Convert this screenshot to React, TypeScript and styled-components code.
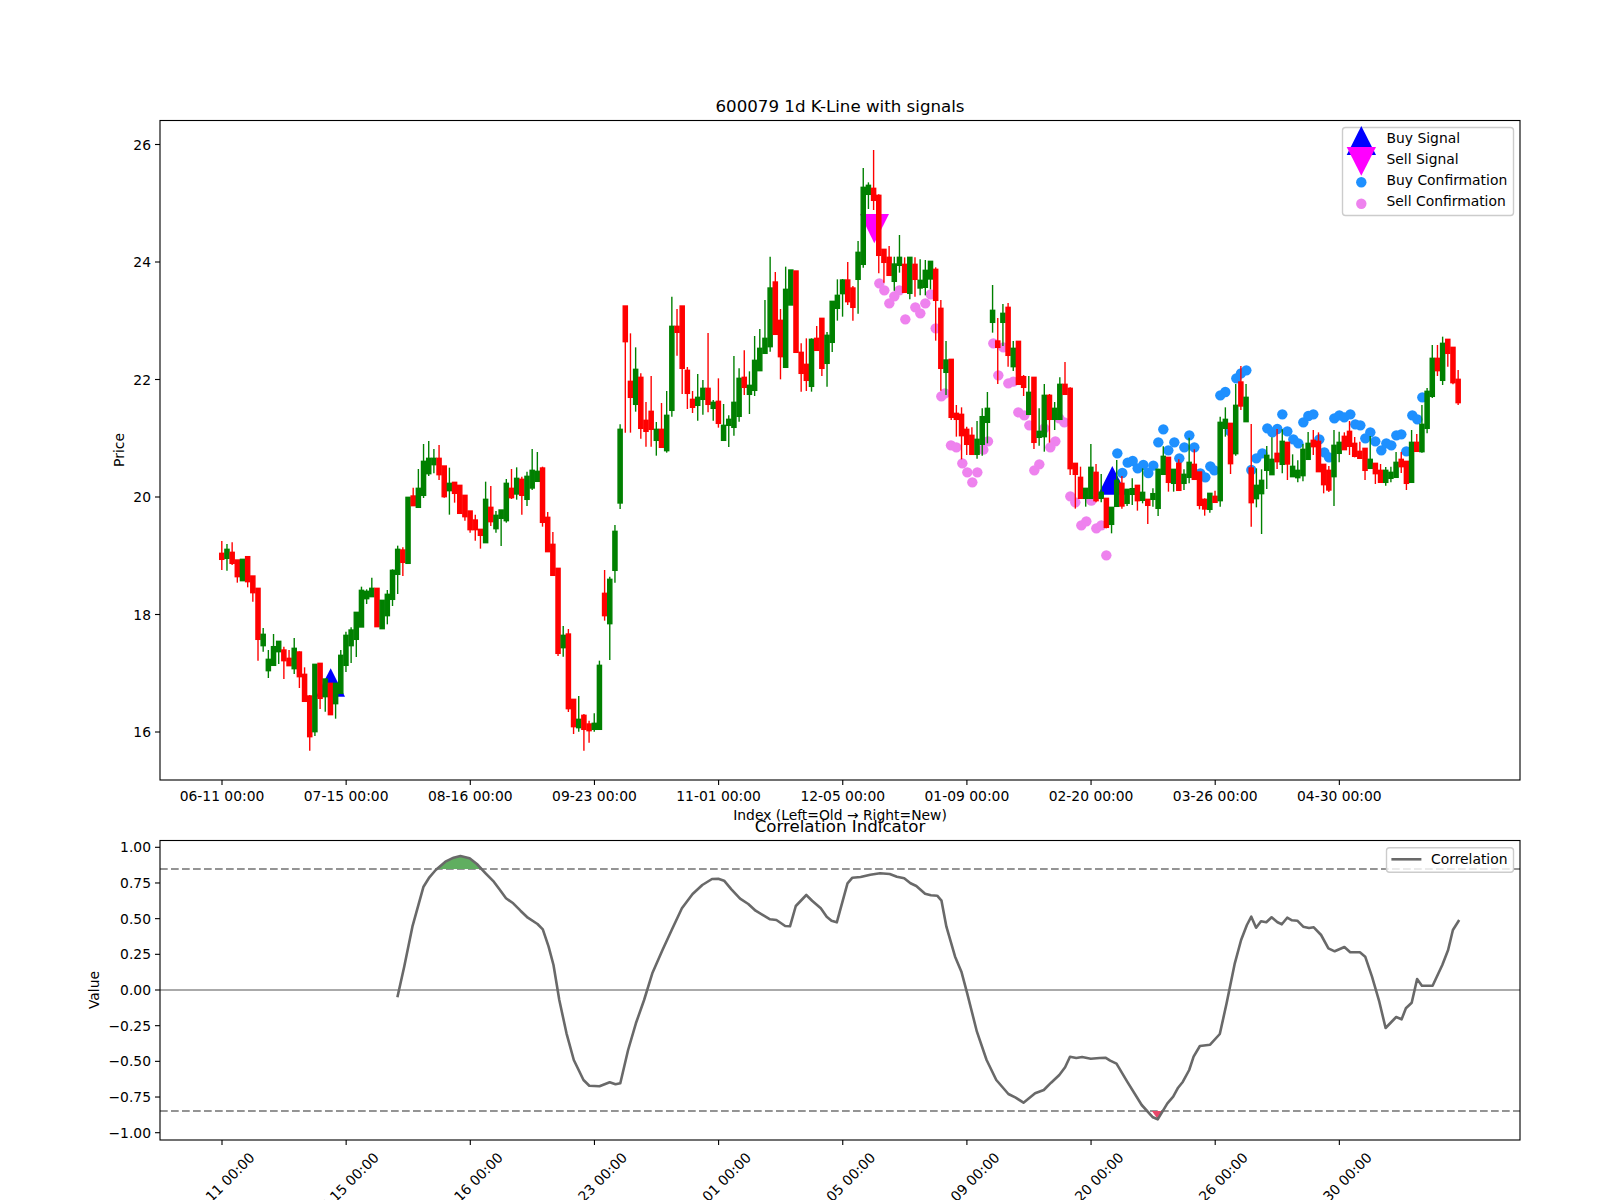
import React from "react";
import styled, { createGlobalStyle } from "styled-components";

const GlobalStyle = createGlobalStyle`
  html, body { margin: 0; padding: 0; background: #ffffff; }
`;

const Figure = styled.main`
  width: 1600px;
  height: 1200px;
  display: flex;
  flex-direction: column;
  overflow: hidden;
  background: #ffffff;
  font-family: "DejaVu Sans", sans-serif;
`;

const PricePanel = styled.svg`
  display: block;
  flex: 0 0 830px;
  width: 1600px;
  height: 830px;
  overflow: visible;
`;

const CorrelationPanel = styled.svg`
  display: block;
  flex: 0 0 370px;
  width: 1600px;
  height: 370px;
  overflow: visible;
`;

const ChartText = styled.text<{ $size?: number; $anchor?: string }>`
  font-family: "DejaVu Sans", sans-serif;
  font-size: ${(p) => p.$size ?? 13.89}px;
  text-anchor: ${(p) => p.$anchor ?? "middle"};
  fill: #000000;
`;

const AxesFrame = styled.rect`
  fill: none;
  stroke: #000000;
  stroke-width: 1.11;
`;

const Tick = styled.line`
  stroke: #000000;
  stroke-width: 1.11;
`;

const LegendBox = styled.rect`
  fill: rgba(255, 255, 255, 0.8);
  stroke: #cccccc;
  stroke-width: 1.39;
`;

const Wick = styled.line<{ $up: boolean }>`
  stroke: ${(p) => (p.$up ? "#008000" : "#ff0000")};
  stroke-width: 1.39;
`;

const Body = styled.rect<{ $up: boolean }>`
  fill: ${(p) => (p.$up ? "#008000" : "#ff0000")};
  stroke: ${(p) => (p.$up ? "#008000" : "#ff0000")};
  stroke-width: 1.39;
`;

const Marker = styled.polygon<{ $color: string }>`
  fill: ${(p) => p.$color};
`;

const Dot = styled.circle<{ $color: string }>`
  fill: ${(p) => p.$color};
`;

const GuideLine = styled.line<{ $dashed?: boolean }>`
  stroke: ${(p) => (p.$dashed ? "#949494" : "#aaaaaa")};
  stroke-width: 2.08;
  stroke-dasharray: ${(p) => (p.$dashed ? "7.7 3.3" : "none")};
`;

const CorrelationLine = styled.polyline`
  fill: none;
  stroke: #696969;
  stroke-width: 2.6;
  stroke-linejoin: round;
`;

const LegendLine = styled.line`
  stroke: #696969;
  stroke-width: 2.6;
`;

const Shade = styled.polygon<{ $color: string }>`
  fill: ${(p) => p.$color};
`;

type Bar = { up: boolean; top: number; bottom: number; high: number; low: number };

const seg = (originY: number, text: string): Bar[] =>
  text
    .trim()
    .split(";")
    .map((row) => {
      const [c, a, b, h, l] = row.trim().split(" ");
      const y = (v: string) => originY + Number(v) / 3;
      return { up: c === "G", top: y(a), bottom: y(b), high: y(h), low: y(l) };
    });

const BARS: Bar[] = [
  ...seg(530, `R 70 88 33 120;G 58 85 42 122;R 67 100 37 105;R 90 140 90 158;G 88 152 88 152;R 80 155 80 172;R 138 188 138 215;R 175 328 175 392;G 313 347 294 365;G 388 422 360 444;G 350 406 312 406;G 334 365 334 402;R 360 392 350 447;R 385 407 360 407;G 355 416 324 432;R 366 440 364 474;R 433 514 412 514;R 498 620 495 662;G 403 605 403 618;R 400 505 400 537;G 447 500 447 545;R 460 554 460 554;G 460 521 460 566;G 376 490 360 490;G 316 406 305 426;G 300 347 292 399;G 247 328 247 381;G 181 291 170 291;G 184 206 178 222;G 175 200 143 200;R 175 290 175 290;G 211 296 211 296;G 193 257 180 283;G 121 208 118 228;G 58 133 47 192;R 60 97 52 138`),
  ...seg(430, `G 202 400 202 400;R 198 227 173 227;G 175 232 117 232;G 94 196 42 204;G 85 131 33 138;G 85 104 57 130;R 85 134 45 150;R 108 200 108 203;G 160 182 113 254;R 157 190 157 218;R 166 250 166 250;R 196 260 196 272;R 243 299 243 308;R 270 299 254 332;R 298 316 298 356;G 208 338 155 338;R 232 275 168 288;G 256 296 243 308;G 240 265 240 348;G 160 272 147 278;R 175 203 117 207;G 145 192 112 209;R 148 196 140 254;G 139 208 125 228;G 121 174 57 180;G 124 154 66 154;R 114 277 110 290;R 262 365 246 365;R 343 436 306 436;R 415 670 415 678;G 616 653 588 680;R 612 836 597 846;R 808 890 808 912;G 868 893 798 905;R 856 898 852 962;R 882 902 872 938;G 880 898 850 905;G 706 898 692 898;R 490 557 420 572;G 448 581 440 690;G 304 421 285 458`),
  ...seg(290, `G 418 639 403 657;R 48 155 48 428;R 274 322 130 428;G 238 343 172 365;R 262 415 250 446;R 391 424 336 470;R 364 418 258 470;G 418 451 396 497;R 418 472 339 472;G 376 482 303 488;G 109 361 20 380;R 109 127 57 197;R 48 235 48 312;R 241 310 231 357;R 328 352 303 369;G 322 346 252 392;G 295 328 270 374;R 295 343 129 367;G 337 355 330 392;R 334 400 265 413;G 406 451 342 451;G 388 406 376 471;G 337 412 198 437;G 265 379 235 395;R 262 292 181 315;G 286 313 244 372;G 211 301 138 318`),
  ...seg(130, `G 655 722 597 722;G 625 670 510 670;G 474 650 380 665;R 456 613 426 613;R 571 680 537 748;G 478 712 410 712;G 420 525 420 525;R 423 667 423 667;R 667 730 640 785;R 703 751 625 783;G 628 769 625 785;R 625 661 588 661;R 565 715 565 738;G 616 700 606 770;G 514 637 514 666;G 496 535 448 572;G 450 491 447 560;R 450 515 396 525;R 474 532 468 572;G 367 448 333 551;G 172 403 114 413;G 166 193 157 237;R 175 211 60 240;R 196 376 193 430;R 358 397 358 458;R 382 436 348 436;G 402 454 380 482;G 382 406 315 428;R 403 487 382 487;G 382 490 382 508;R 403 448 382 500;G 451 474 388 496;G 421 472 390 496;G 394 447 394 478;R 418 511 412 632`),
  ...seg(270, `R 115 295 90 362;G 270 307 213 375;R 268 442 268 450;R 430 448 405 500;R 433 497 412 568;R 478 523 470 555;R 496 553 472 553;G 508 553 453 566;G 440 523 415 557;G 415 457 366 520;G 121 157 45 188;R 213 232 144 342;G 130 157 102 228;R 112 256 99 290;G 235 290 213 303;R 214 343 214 343;R 320 352 315 378;G 367 433 318 433;R 322 517 322 537;G 484 502 415 527;G 376 500 342 545;R 376 448 372 518;G 415 448 396 480;G 343 448 322 448;R 343 373 276 373;R 355 596 352 615;R 580 613 580 716;R 622 685 590 685;G 655 685 655 710;G 592 685 522 685;R 607 692 582 697;G 667 685 612 697;R 685 772 685 775;G 712 763 712 790;G 631 709 570 709;R 640 708 618 716;G 658 700 658 708;G 656 673 625 705;R 646 692 646 722;G 667 691 595 700;R 688 706 688 762;G 671 688 655 710;G 598 715 596 738;G 559 613 529 613;R 562 637 562 665;G 598 640 598 665;R 580 661 568 661;G 613 640 598 660;G 577 622 503 640;R 583 628 538 628;R 606 706 606 718;R 688 717 685 737;G 670 718 670 728;R 679 697 662 697`),
  ...seg(320, `G 307 542 290 560;G 298 325 262 350;R 310 431 310 462;G 256 401 192 407;R 186 258 138 270;G 232 305 192 305;R 444 548 312 620;G 496 536 445 562;G 481 521 448 642;G 406 451 378 507;G 418 464 352 464;R 400 425 327 447;G 364 433 328 460;R 367 432 367 480;G 439 470 403 470;G 451 473 421 487;G 388 467 372 484;G 370 418 336 418;R 361 380 330 405;R 364 455 337 455;R 433 494 433 520;R 451 510 438 516;G 376 470 330 558;G 367 400 335 427;R 349 389 337 389;R 334 379 303 405;R 370 409 351 412;R 394 415 365 415;R 385 451 385 480;G 418 445 348 445;R 430 461 430 492;R 451 487 432 487;G 451 487 441 497;G 457 475 440 487;G 427 472 396 472;R 418 440 396 459;R 424 490 424 510;G 367 487 330 487;R 367 394 342 394;G 313 395 255 398;G 214 325 204 340;G 115 229 75 234;R 115 152 75 168;G 70 181 50 195;R 58 100 58 140;R 82 188 82 193;R 178 248 150 255`),
];

const barX = (i: number) => 221.8 + 5.173 * i;

const crop = (ox: number, oy: number, pts: number[][]) =>
  pts.map(([x, y]) => [ox + x / 3, oy + y / 3]);

const VIOLET_DOTS = [
  ...crop(600, 130, [[838, 460], [853, 481], [868, 520], [883, 499], [898, 481]]),
  ...crop(900, 270, [
    [46, 112], [61, 130], [76, 100], [16, 148], [92, 73], [107, 175], [280, 220], [310, 232], [295, 316],
    [325, 340], [340, 335], [124, 379], [135, 370], [355, 427], [373, 436], [388, 466], [433, 475], [493, 457],
    [478, 445], [264, 514], [250, 539], [153, 526], [169, 532], [187, 580], [202, 607], [232, 607], [217, 637],
    [418, 583], [403, 601], [466, 514], [451, 532], [511, 679], [526, 697], [574, 692], [544, 766], [559, 754],
    [589, 775], [604, 766], [619, 856],
  ]),
];

const BLUE_DOTS = [
  ...crop(1090, 400, [
    [82, 160], [113, 188], [128, 183], [143, 205], [160, 195], [175, 219], [190, 197], [97, 219], [205, 127],
    [220, 88], [235, 151], [253, 127], [268, 175],
  ]),
  ...crop(1180, 320, [
    [13, 382], [28, 346], [43, 382], [61, 460], [76, 472], [91, 439], [103, 451], [121, 226], [136, 216],
    [169, 175], [183, 160], [199, 151], [150, 333], [214, 450], [229, 415], [247, 400], [262, 325], [277, 337],
    [292, 327], [307, 283], [322, 334], [340, 358], [355, 370], [370, 307], [385, 288], [400, 283], [418, 358],
    [433, 397], [447, 412], [463, 295], [478, 286], [493, 292], [511, 283], [526, 313], [541, 316], [556, 355],
    [571, 337], [586, 364], [604, 391], [619, 370], [634, 376], [649, 346], [664, 343], [679, 394], [697, 286],
    [712, 298], [727, 232],
  ]),
];

const z7 = (x: number, y: number) => `${(60 + x / 2.063).toFixed(1)},${(790 + y / 3).toFixed(1)}`;
const z8 = (x: number, y: number) => `${(800 + x / 2.063).toFixed(1)},${(790 + y / 3).toFixed(1)}`;

const LEFT_CURVE = [
  [696, 622], [710, 530], [727, 410], [750, 290], [762, 262], [775, 240], [795, 215], [812, 203], [826, 198],
  [845, 205], [860, 222], [878, 250], [895, 275], [905, 295], [920, 325], [935, 340], [950, 362], [965, 383],
  [985, 402], [996, 418], [1008, 470], [1018, 525], [1030, 630], [1045, 730], [1060, 810], [1080, 870],
  [1092, 887], [1113, 889], [1134, 877], [1146, 883], [1156, 880], [1172, 780], [1188, 700], [1205, 630],
  [1222, 550], [1243, 480], [1262, 420], [1283, 355], [1305, 312], [1325, 285], [1345, 267], [1358, 266],
  [1370, 272], [1385, 298], [1403, 326], [1420, 342], [1435, 362], [1465, 388], [1478, 390], [1496, 408],
  [1506, 409], [1518, 348],
];

const RIGHT_CURVE = [
  [13, 315], [25, 332], [43, 355], [55, 380], [65, 392], [76, 397], [98, 280], [108, 263], [125, 261],
  [145, 254], [165, 250], [185, 252], [200, 260], [215, 265], [228, 280], [240, 288], [258, 311], [270, 316],
  [283, 317], [292, 332], [302, 410], [320, 500], [333, 545], [345, 610], [365, 725], [385, 810], [405, 870],
  [430, 912], [445, 923], [461, 938], [485, 910], [503, 900], [518, 878], [535, 855], [547, 832], [557, 800],
  [570, 804], [582, 801], [600, 806], [618, 804], [630, 803], [640, 812], [653, 821], [675, 875], [705, 945],
  [728, 982], [738, 988], [758, 940], [770, 920], [780, 893], [790, 875], [803, 840], [812, 800], [825, 768],
  [846, 764], [866, 732], [880, 640], [897, 520], [910, 450], [922, 405], [931, 380], [941, 413], [951, 394],
  [962, 397], [973, 382], [985, 397], [994, 403], [1005, 383], [1015, 391], [1026, 392], [1038, 410],
  [1050, 414], [1060, 412], [1075, 435], [1090, 475], [1103, 484], [1123, 471], [1135, 487], [1155, 487],
  [1166, 500], [1180, 560], [1195, 635], [1208, 714], [1230, 681], [1241, 688], [1250, 655], [1262, 638],
  [1273, 567], [1283, 587], [1305, 587], [1325, 525], [1337, 480], [1347, 420], [1360, 390],
];

const CURVE_POINTS = [
  ...LEFT_CURVE.map(([x, y]) => z7(x, y)),
  ...RIGHT_CURVE.map(([x, y]) => z8(x, y)),
].join(" ");

const GREEN_SHADE = [[778, 237], [795, 215], [812, 203], [826, 198], [845, 205], [860, 222], [870, 237]]
  .map(([x, y]) => z7(x, y))
  .join(" ");
const RED_SHADE = [[726, 963], [750, 963], [738, 988]].map(([x, y]) => z8(x, y)).join(" ");

const DATES = ["06-11", "07-15", "08-16", "09-23", "11-01", "12-05", "01-09", "02-20", "03-26", "04-30"];
const tickX = (i: number) => 222 + 124.15 * i;

const PRICE_TICKS = [26, 24, 22, 20, 18, 16];
const priceY = (p: number) => 144.5 + (26 - p) * 58.75;

const CORR_TICKS = [1, 0.75, 0.5, 0.25, 0, -0.25, -0.5, -0.75, -1];
const corrY = (v: number) => 990 - 142.7 * v;
const corrLabel = (v: number) => (v < 0 ? "\u2212" : "") + Math.abs(v).toFixed(2);

export default function App() {
  return (
    <>
      <GlobalStyle />
      <Figure>
        <PricePanel viewBox="0 0 1600 830">
          <ChartText x={840} y={111.5} $size={16.67}>600079 1d K-Line with signals</ChartText>

          <Marker $color="#0000ff" points="316,696.7 345,696.7 330.7,668.3" />
          <Marker $color="#0000ff" points="1098,494.7 1127,494.7 1112.3,466" />
          <Marker $color="#ff00ff" points="860,214 889,214 874.3,243.3" />
          {VIOLET_DOTS.map(([x, y], i) => (
            <Dot key={`v${i}`} $color="#ee82ee" cx={x} cy={y} r={5.2} />
          ))}
          {BLUE_DOTS.map(([x, y], i) => (
            <Dot key={`b${i}`} $color="#1e90ff" cx={x} cy={y} r={5.2} />
          ))}

          {BARS.map((b, i) => (
            <g key={i}>
              <Wick $up={b.up} x1={barX(i)} x2={barX(i)} y1={b.high} y2={b.low} />
              <Body $up={b.up} x={barX(i) - 2.07} width={4.14} y={b.top} height={Math.max(b.bottom - b.top, 0.5)} />
            </g>
          ))}

          <AxesFrame x={160} y={120.5} width={1360} height={659.5} />
          {DATES.map((d, i) => (
            <g key={d}>
              <Tick x1={tickX(i)} x2={tickX(i)} y1={780} y2={785} />
              <ChartText x={tickX(i)} y={801}>{`${d} 00:00`}</ChartText>
            </g>
          ))}
          {PRICE_TICKS.map((p) => (
            <g key={p}>
              <Tick x1={155} x2={160} y1={priceY(p)} y2={priceY(p)} />
              <ChartText x={151} y={priceY(p) + 5} $anchor="end">{p}</ChartText>
            </g>
          ))}
          <ChartText x={840} y={820}>Index (Left=Old → Right=New)</ChartText>
          <ChartText transform="translate(124,450) rotate(-90)">Price</ChartText>

          <LegendBox x={1342.5} y={127.5} width={171} height={88} rx={3} />
          <Marker $color="#0000ff" points="1346.7,155 1376,155 1361.3,126" />
          <Marker $color="#ff00ff" points="1346.7,147 1376,147 1361.3,175.7" />
          <Dot $color="#1e90ff" cx={1361.3} cy={182.3} r={5.2} />
          <Dot $color="#ee82ee" cx={1361.3} cy={203.7} r={5.2} />
          <ChartText x={1386.5} y={143} $anchor="start">Buy Signal</ChartText>
          <ChartText x={1386.5} y={164} $anchor="start">Sell Signal</ChartText>
          <ChartText x={1386.5} y={185} $anchor="start">Buy Confirmation</ChartText>
          <ChartText x={1386.5} y={206} $anchor="start">Sell Confirmation</ChartText>
        </PricePanel>

        <CorrelationPanel viewBox="0 830 1600 370">
          <ChartText x={840} y={831.7} $size={16.67}>Correlation Indicator</ChartText>

          <GuideLine x1={160} x2={1520} y1={990} y2={990} />
          <GuideLine $dashed x1={160} x2={1520} y1={869} y2={869} />
          <GuideLine $dashed x1={160} x2={1520} y1={1111} y2={1111} />
          <Shade $color="#60ae60" points={GREEN_SHADE} />
          <Shade $color="#e8486a" points={RED_SHADE} />
          <CorrelationLine points={CURVE_POINTS} />

          <AxesFrame x={160} y={840.5} width={1360} height={299.5} />
          {DATES.map((d, i) => (
            <g key={d}>
              <Tick x1={tickX(i)} x2={tickX(i)} y1={1140} y2={1145} />
              <ChartText transform={`translate(${tickX(i)},1185) rotate(-45)`} dy={5}>{`${d} 00:00`}</ChartText>
            </g>
          ))}
          {CORR_TICKS.map((v) => (
            <g key={v}>
              <Tick x1={155} x2={160} y1={corrY(v)} y2={corrY(v)} />
              <ChartText x={151} y={corrY(v) + 5} $anchor="end">{corrLabel(v)}</ChartText>
            </g>
          ))}
          <ChartText transform="translate(99,990) rotate(-90)">Value</ChartText>

          <LegendBox x={1386.5} y={847.7} width={127} height={24.5} rx={3} />
          <LegendLine x1={1391.4} x2={1421.4} y1={859.3} y2={859.3} />
          <ChartText x={1431} y={864} $anchor="start">Correlation</ChartText>
        </CorrelationPanel>
      </Figure>
    </>
  );
}
